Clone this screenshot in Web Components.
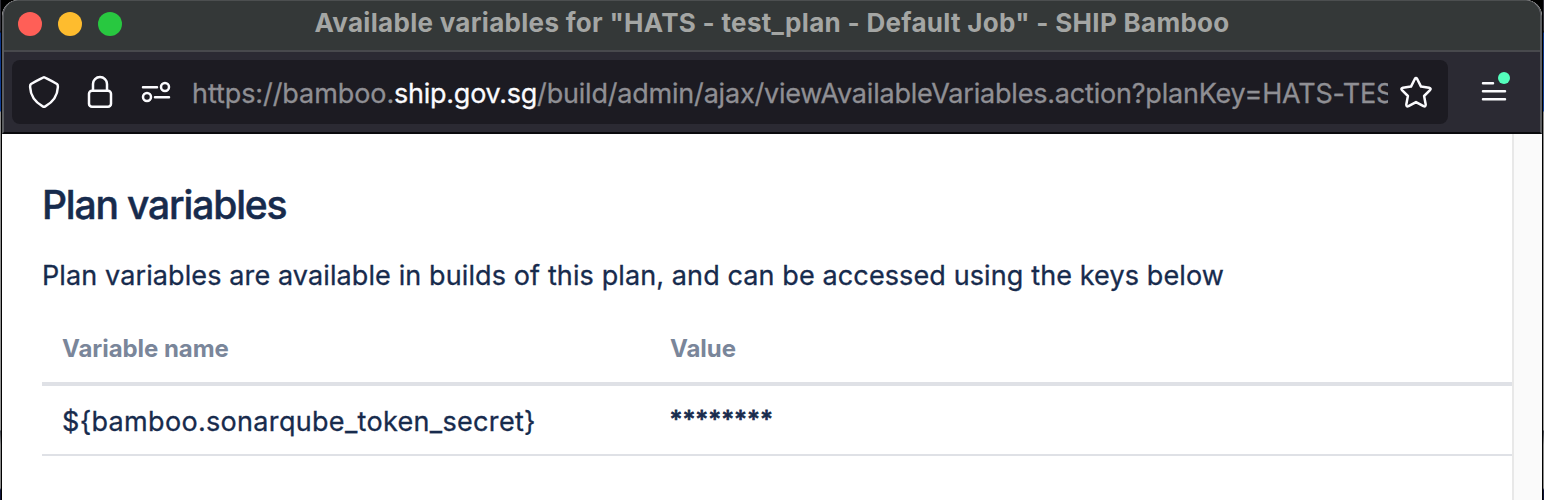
<!DOCTYPE html>
<html lang="en">
<head>
<meta charset="utf-8">
<title>Available variables</title>
<style>
html,body{margin:0;height:100%}
body{overflow:hidden;background:#000;font-family:Inter,"Liberation Sans",sans-serif}
</style>
</head>
<body>
<app-window>
  <title-bar slot="title">Available variables for "HATS - test_plan - Default Job" - SHIP Bamboo</title-bar>
  <address-bar slot="toolbar"><span>https://bamboo.</span><b>ship.gov.sg</b><i>/build/admin/ajax/viewAvailableVariables.action?planKey=HATS-TEST</i></address-bar>
  <plan-variables></plan-variables>
</app-window>
<script>
const define = (name, html) => customElements.define(name, class extends HTMLElement {
  constructor() {
    super();
    const t = document.createElement('template');
    t.innerHTML = html;
    this.attachShadow({mode: 'open'}).appendChild(t.content.cloneNode(true));
  }
});

define('app-window', `
<style>
:host{display:flex;box-sizing:border-box;width:1544px;height:500px;padding:0 2px;
 background:linear-gradient(90deg,transparent 1px,#000 1px,#000 1543px,transparent 1543px),
 linear-gradient(#30303a 0,#30303a 30px,#101018 32px,#0b3385 33px,#123f96 111px,#8b8b8b 112px,#989898 430px,#3c4048 431px,#8b8b8b 445px,#8b8b8b 488px,#10143a 490px)}
.frame{width:1540px;height:500px;display:flex;flex-direction:column;overflow:hidden;border-radius:16px 16px 0 0;background:#fff}
.chrome{flex:none;box-sizing:border-box;height:134px;border:solid #5b5d60;border-width:1px 2px 0;border-bottom:2px solid #09090c;border-top-color:#4c4f50;border-radius:16px 16px 0 0;overflow:hidden;background:#2b2a33}
</style>
<div class="frame"><div class="chrome"><slot name="title"></slot><slot name="toolbar"></slot></div><slot></slot></div>`);

define('title-bar', `
<style>
:host{display:grid;grid-template-columns:297px 1fr 297px;align-items:center;box-sizing:border-box;padding-bottom:3px;background:#343838;border-bottom:2px solid #48494d;height:51px}
.lights{display:flex;gap:16px;padding-left:14px}
.lights i{width:24px;height:24px;border-radius:50%;background:#ff5f57}
.lights i:nth-child(2){background:#febc2e}.lights i:nth-child(3){background:#28c840}
.text{display:flex;justify-content:center;white-space:nowrap;font-weight:700;font-size:26px;line-height:32px;color:#a4a6a4;letter-spacing:.3px;padding-bottom:2px}
</style>
<div class="lights"><i></i><i></i><i></i></div><div class="text"><slot></slot></div>`);

define('address-bar', `
<style>
:host{display:flex;height:80px;align-items:center;padding-left:8px;box-sizing:border-box}
.field{width:1436px;height:64px;box-sizing:border-box;border-radius:8px;background:#1c1b22;display:flex;align-items:center;flex:none}
svg{display:block;flex:none;overflow:visible;fill:none;stroke:#fbfbfe;stroke-width:2.5;stroke-linejoin:round;stroke-linecap:round}
.icons{display:flex;width:180px;flex:none}
.url{width:1196px;overflow:hidden;white-space:nowrap;font-size:27px;line-height:40px;color:#8f8f94;padding-top:4px;-webkit-text-stroke:.3px}
::slotted(*){font-style:normal;font-weight:400;letter-spacing:-.2px}
::slotted(span){letter-spacing:-.08px}
::slotted(b){color:#fbfbfe;letter-spacing:-.26px}
.star{margin-left:10px}
.menu{margin-left:31px}
</style>
<div class="field"><div class="icons">
<svg width="180" height="64" viewBox="12 60 180 64">
<path d="M44 77.3 Q45 77.3 57 84 Q58 84.8 57.9 87 C57.5 96 53 102 45.3 106.4 Q44 107.2 42.7 106.4 C35 102 30.5 96 30.1 87 Q30 84.8 31 84 Q43 77.3 44 77.3Z"/>
<path d="M93 90.5V84a7 7 0 0 1 14 0v6.5"/><rect x="89" y="90.7" width="22" height="16" rx="3"/>
<path d="M143 87.3H157M155 97.3H169"/><circle cx="165" cy="87" r="4"/><circle cx="147" cy="97" r="4"/>
</svg></div>
<div class="url"><slot></slot></div>
<svg class="star" width="36" height="36" viewBox="1398 74 36 36"><path d="M1414.8 79 Q1416 77.2 1417.2 79 L1421 86.6 L1429.1 87.8 Q1431.6 88.5 1430 90.2 L1424.1 96 L1425.7 104.5 Q1425.7 107 1423.5 106.2 L1416 102.1 L1408.5 106.2 Q1406.3 107 1406.3 104.5 L1407.9 96 L1402 90.2 Q1400.4 88.5 1402.9 87.8 L1411 86.6Z"/></svg>
</div>
<svg class="menu" width="36" height="40" viewBox="1479 72 36 40"><path d="M1483 83.2H1493M1483 91.2H1505M1483 99.2H1505"/><circle cx="1504" cy="78" r="6" fill="#54ffbd" stroke="none"/></svg>`);

define('plan-variables', `
<style>
:host{display:flex;flex:1;min-height:0;color:#172b4d}
main{flex:1;min-width:0;padding:43px 0 0 40px}
.track{box-sizing:border-box;width:30px;background:#fafafa;border-left:2px solid #e8e8e8}
h2{margin:0;font-size:39px;line-height:56px;font-weight:500;letter-spacing:-1.15px;white-space:nowrap;-webkit-text-stroke:.5px}
p{margin:23px 0 0;font-size:27px;line-height:40px;letter-spacing:.11px;white-space:nowrap;-webkit-text-stroke:.3px}
.row{display:grid;grid-template-columns:608px 1fr;box-sizing:border-box;padding-left:20px;align-items:center;white-space:nowrap}
.head{height:72px;margin-top:18px;border-bottom:4px solid #dfe1e6;color:#7a869a;font-weight:700;font-size:24px;letter-spacing:-.06px}
.data{height:70px;padding-top:4px;border-bottom:2px solid #dfe1e6;font-size:27px;line-height:40px;-webkit-text-stroke:.3px}
.key{letter-spacing:.32px}
.stars{font-size:24px;letter-spacing:.9px;padding-bottom:5px;-webkit-text-stroke:.8px}
</style>
<main>
<h2>Plan variables</h2>
<p>Plan variables are available in builds of this plan, and can be accessed using the keys below</p>
<div class="row head"><span>Variable name</span><span>Value</span></div>
<div class="row data"><span class="key">\${bamboo.sonarqube_token_secret}</span><span class="stars">********</span></div>
</main><div class="track"></div>`);
</script>
</body>
</html>
